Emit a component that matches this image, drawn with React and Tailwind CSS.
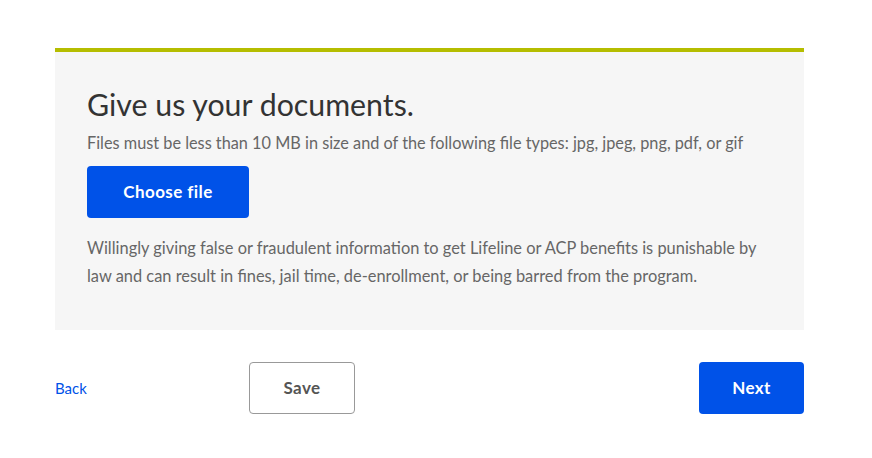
export default function App() {
  return (
    <div className="min-h-[458px] bg-white pt-[48px] font-['Lato','Noto_Sans',sans-serif]">
      <div className="ml-[55px] w-[749px]">
        {/* Upload panel */}
        <div className="border-t-4 border-[#b5bd00] bg-[#f6f6f6] px-8 pt-[34px] pb-[40px]">
          <h1 className="text-[30.3px] leading-[36px] text-[#333333]">Give us your documents.</h1>
          <p className="mt-[9px] text-[16.3px] leading-[24px] text-[#666666]">
            Files must be less than 10 MB in size and of the following file types: jpg, jpeg, png, pdf, or gif
          </p>
          <button className="mt-[11px] h-[52px] w-[162px] rounded bg-[#0052e8] text-[17px] font-bold tracking-wide text-white">
            Choose file
          </button>
          <p className="mt-[16px] text-[16.4px] leading-[28px] text-[#666666]">
            Willingly giving false or fraudulent information to get Lifeline or ACP benefits is punishable by
            <br />
            law and can result in fines, jail time, de-enrollment, or being barred from the program.
          </p>
        </div>

        {/* Actions */}
        <div className="mt-[32px] flex items-center">
          <a href="#" className="w-[194px] text-[15px] text-[#0052e8]">Back</a>
          <button className="h-[52px] w-[106px] rounded border border-[#999999] bg-white text-[17px] font-bold tracking-wide text-[#555555]">
            Save
          </button>
          <div className="flex-1" />
          <button className="h-[52px] w-[105px] rounded bg-[#0052e8] text-[17px] font-bold tracking-wide text-white">
            Next
          </button>
        </div>
      </div>
    </div>
  );
}
